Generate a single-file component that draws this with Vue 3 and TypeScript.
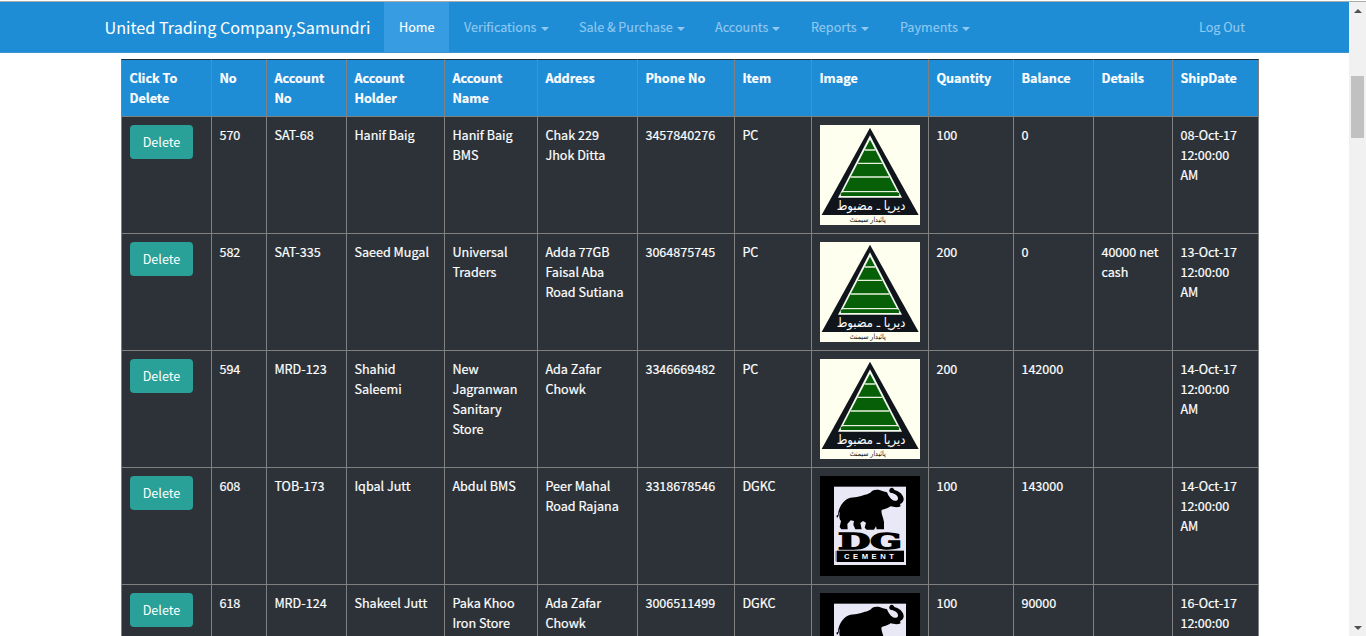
<script setup lang="ts">
interface MenuItem {
  label: string
  width: number
  caret: boolean
  active?: boolean
}

interface Order {
  no: string
  accountNo: string
  holder: string[]
  name: string[]
  address: string[]
  phone: string
  item: 'PC' | 'DGKC'
  quantity: string
  balance: string
  details: string[]
  date: string
}

const menu: MenuItem[] = [
  { label: 'Home', width: 65, caret: false, active: true },
  { label: 'Verifications', width: 115, caret: true },
  { label: 'Sale & Purchase', width: 136, caret: true },
  { label: 'Accounts', width: 96, caret: true },
  { label: 'Reports', width: 89, caret: true },
  { label: 'Payments', width: 100, caret: true },
]

const columns: { title: string[]; width: number }[] = [
  { title: ['Click To', 'Delete'], width: 90 },
  { title: ['No'], width: 55 },
  { title: ['Account', 'No'], width: 80 },
  { title: ['Account', 'Holder'], width: 98 },
  { title: ['Account', 'Name'], width: 93 },
  { title: ['Address'], width: 100 },
  { title: ['Phone No'], width: 97 },
  { title: ['Item'], width: 77 },
  { title: ['Image'], width: 117 },
  { title: ['Quantity'], width: 85 },
  { title: ['Balance'], width: 80 },
  { title: ['Details'], width: 79 },
  { title: ['ShipDate'], width: 87 },
]

const orders: Order[] = [
  { no: '570', accountNo: 'SAT-68', holder: ['Hanif Baig'], name: ['Hanif Baig', 'BMS'], address: ['Chak 229', 'Jhok Ditta'], phone: '3457840276', item: 'PC', quantity: '100', balance: '0', details: [], date: '08-Oct-17' },
  { no: '582', accountNo: 'SAT-335', holder: ['Saeed Mugal'], name: ['Universal', 'Traders'], address: ['Adda 77GB', 'Faisal Aba', 'Road Sutiana'], phone: '3064875745', item: 'PC', quantity: '200', balance: '0', details: ['40000 net', 'cash'], date: '13-Oct-17' },
  { no: '594', accountNo: 'MRD-123', holder: ['Shahid', 'Saleemi'], name: ['New', 'Jagranwan', 'Sanitary', 'Store'], address: ['Ada Zafar', 'Chowk'], phone: '3346669482', item: 'PC', quantity: '200', balance: '142000', details: [], date: '14-Oct-17' },
  { no: '608', accountNo: 'TOB-173', holder: ['Iqbal Jutt'], name: ['Abdul BMS'], address: ['Peer Mahal', 'Road Rajana'], phone: '3318678546', item: 'DGKC', quantity: '100', balance: '143000', details: [], date: '14-Oct-17' },
  { no: '618', accountNo: 'MRD-124', holder: ['Shakeel Jutt'], name: ['Paka Khoo', 'Iron Store'], address: ['Ada Zafar', 'Chowk'], phone: '3006511499', item: 'DGKC', quantity: '100', balance: '90000', details: [], date: '16-Oct-17' },
]

const cellsBeforeImage = (o: Order): string[][] => [
  [o.no], [o.accountNo], o.holder, o.name, o.address, [o.phone], [o.item],
]
const cellsAfterImage = (o: Order): string[][] => [
  [o.quantity], [o.balance], o.details, [o.date, '12:00:00', 'AM'],
]
</script>

<template>
  <div class="window">
    <div class="page">
      <nav class="navbar">
        <a class="brand">United Trading Company,Samundri</a>
        <a
          v-for="m in menu"
          :key="m.label"
          class="nav-item"
          :class="{ active: m.active }"
          :style="{ width: m.width + 'px' }"
        >{{ m.label }}<i v-if="m.caret" class="caret"></i></a>
        <a class="nav-item logout">Log Out</a>
      </nav>

      <table class="orders">
        <colgroup>
          <col v-for="(c, i) in columns" :key="i" :style="{ width: c.width + 'px' }" />
        </colgroup>
        <thead>
          <tr>
            <th v-for="(c, i) in columns" :key="i">
              <div v-for="line in c.title" :key="line">{{ line }}</div>
            </th>
          </tr>
        </thead>
        <tbody>
          <tr v-for="o in orders" :key="o.no">
            <td class="action"><button class="delete">Delete</button></td>
            <td v-for="(cell, i) in cellsBeforeImage(o)" :key="'a' + i">
              <div v-for="line in cell" :key="line">{{ line }}</div>
            </td>
            <td class="picture">
              <svg v-if="o.item === 'PC'" class="logo" viewBox="30 30 300 300">
                <rect x="30" y="30" width="300" height="300" fill="#fffff0" />
                <path d="M180 38L326 300H35Z" fill="#10151b" />
                <path d="M180 61L276 248H84Z" fill="#f4faef" />
                <path d="M180 74L268 243H92Z" fill="#075f07" />
                <path d="M164 105H196M143 145H217M122 186H238M99 230H261" stroke="#e8f2df" stroke-width="4" />
                <path d="M92 236H268" stroke="#075f07" stroke-width="6" />
                <text x="183" y="284" text-anchor="middle" direction="rtl" class="urdu-main" textLength="206" lengthAdjust="spacingAndGlyphs">دیرپا ـ مضبوط</text>
                <text x="173" y="321" text-anchor="middle" direction="rtl" class="urdu-sub" textLength="108" lengthAdjust="spacingAndGlyphs">پائیدار سیمنٹ</text>
              </svg>
              <svg v-else class="logo" viewBox="30 30 300 300">
                <rect x="30" y="30" width="300" height="300" fill="#000" />
                <rect x="72" y="62" width="216" height="235" fill="#e8e8f6" />
                <path
                  d="M81 155L79 149L84 146C85 130 93 113 108 101C127 91 142 96 160 88C174 84 181 82 186 75C197 69 211 72 219 76L231 79C235 89 240 98 249 103C258 107 265 103 264 96C263 88 252 81 243 81C235 79 236 66 246 65C252 66 251 71 255 73C269 76 282 89 281 101C280 108 275 112 270 114L272 121C262 126 250 123 242 121C234 127 224 129 215 132C212 142 220 154 222 168L222 190H200L198 181L192 191H170L164 185L168 170L159 165L151 171L155 190H136L130 176L132 165L122 163L112 174L113 190H94L89 183L93 165C86 157 88 147 89 137C85 143 88 151 81 155Z"
                  fill="#000"
                />
                <text x="84" y="248" class="dg" textLength="192" lengthAdjust="spacingAndGlyphs">DG</text>
                <rect x="80" y="254" width="202" height="34" fill="#000" />
                <path d="M78 255V286" stroke="#6a6a9e" stroke-width="3" />
                <text x="102" y="279" class="cement" textLength="150">CEMENT</text>
              </svg>
            </td>
            <td v-for="(cell, i) in cellsAfterImage(o)" :key="'b' + i">
              <div v-for="line in cell" :key="line">{{ line }}</div>
            </td>
          </tr>
        </tbody>
      </table>
    </div>

    <div class="scrollbar">
      <i class="arrow up"></i>
      <div class="track"><div class="thumb"></div></div>
      <i class="arrow down"></i>
    </div>
  </div>
</template>

<style>
html,
body {
  margin: 0;
  overflow: hidden;
  background: #fff;
}
</style>

<style scoped>
.window {
  box-sizing: border-box;
  width: 1366px;
  height: 636px;
  padding-top: 1px;
  display: flex;
  overflow: hidden;
  font-family: "Noto Sans CJK SC", "Source Sans Pro", sans-serif;
  font-size: 12.6px;
  line-height: 20px;
  color: #fff;
}
.page {
  width: 1349px;
  height: 635px;
  overflow: hidden;
  border-top: 1px solid #aaa;
  box-sizing: border-box;
}
.navbar {
  display: flex;
  box-sizing: border-box;
  height: 51px;
  padding: 0 89px 0 90px;
  background: #1f8dd6;
  border-bottom: 1px solid #3d92cb;
}
.brand {
  box-sizing: border-box;
  width: 294px;
  padding: 15px 0 0 14.5px;
  font-size: 16.2px;
  white-space: nowrap;
}
.nav-item {
  box-sizing: border-box;
  padding: 15px 0 0 15px;
  color: #8fc8f0;
  white-space: nowrap;
  -webkit-text-stroke: 0.15px currentColor;
}
.nav-item.active {
  color: #fff;
  background: #389ce2;
}
.logout {
  margin-left: auto;
  width: 76px;
}
.caret {
  display: inline-block;
  margin-left: 4px;
  vertical-align: middle;
  border-top: 4px solid #8fc8f0;
  border-left: 4px solid transparent;
  border-right: 4px solid transparent;
}
.orders {
  width: 1138px;
  margin: 6px 0 0 121px;
  table-layout: fixed;
  border-collapse: separate;
  border-spacing: 0;
}
th,
td {
  box-sizing: border-box;
  padding: 8px 0 0 7.4px;
  border-top: 1px solid #808080;
  border-left: 1px solid #808080;
  text-align: left;
  vertical-align: top;
  white-space: nowrap;
  -webkit-text-stroke: 0.2px #fff;
}
th:last-child,
td:last-child {
  border-right: 1px solid #808080;
}
th {
  height: 57px;
  background: #1f8dd6;
  border-top-color: #1b2b38;
  font-weight: 700;
}
td {
  height: 117px;
  background: #2c3238;
}
td.action,
td.picture {
  padding-left: 8px;
  -webkit-text-stroke: 0;
}
.delete {
  display: block;
  width: 63px;
  height: 34px;
  padding: 0;
  border: 0;
  border-radius: 4px;
  background: #2aa198;
  color: #fff;
  font: inherit;
}
.logo {
  display: block;
  width: 100px;
  height: 100px;
}
.urdu-main {
  font: 400 38px "DejaVu Sans", sans-serif;
  fill: #fff;
}
.urdu-sub {
  font: 22px "DejaVu Sans", sans-serif;
  fill: #111;
}
.dg {
  font: 700 66px "DejaVu Serif", serif;
  fill: #000;
  stroke: #000;
  stroke-width: 4px;
}
.cement {
  font: 700 23px "Liberation Sans", sans-serif;
  fill: #fff;
}
.scrollbar {
  display: flex;
  flex-direction: column;
  align-items: center;
  box-sizing: border-box;
  width: 17px;
  height: 635px;
  background: #f1f1f1;
  border-top: 1px solid #aaa;
}
.arrow {
  width: 0;
  height: 0;
  border-left: 4px solid transparent;
  border-right: 4px solid transparent;
}
.up {
  margin-top: 7px;
  border-bottom: 4px solid #505050;
}
.down {
  margin-bottom: 6px;
  border-top: 4px solid #505050;
}
.track {
  flex: 1;
  padding-top: 63px;
}
.thumb {
  width: 13px;
  height: 62px;
  background: #c1c1c1;
}
</style>
